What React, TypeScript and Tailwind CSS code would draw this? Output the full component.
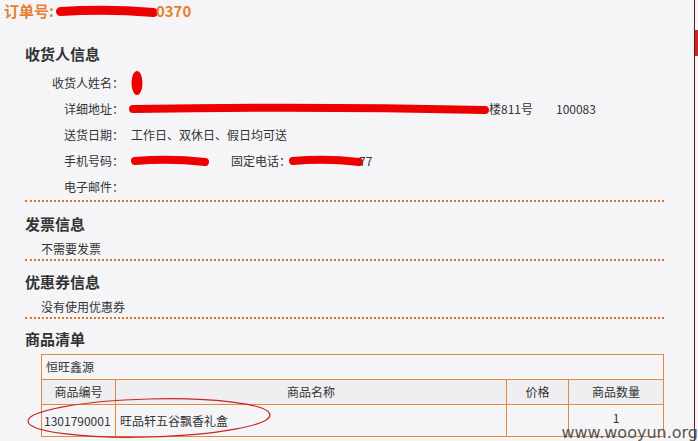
const cjk = "font-['SimSun','Noto_Sans_CJK_SC',sans-serif]";

function Scribble({ w, h = 8, className = "" }: { w: number; h?: number; className?: string }) {
  return (
    <svg width={w} height={h + 4} className={className} viewBox={`0 0 ${w} ${h + 4}`}>
      <path
        d={`M ${h / 2} ${h / 2 + 2} Q ${w / 2} ${h / 2 - 1} ${w - h / 2} ${h / 2 + 3}`}
        stroke="#ee0000"
        strokeWidth={h}
        strokeLinecap="round"
        fill="none"
      />
    </svg>
  );
}

function Row({ label, children }: { label: string; children?: React.ReactNode }) {
  return (
    <div className="flex h-[26px] items-center">
      <div className="w-[99px] text-right text-[#333]">{label}</div>
      <div className="ml-[7px] flex items-center text-[#333]">{children}</div>
    </div>
  );
}

function Dotted() {
  return <div className="h-0 border-b-2 border-dotted border-[#d9742b]" />;
}

function Heading({ children, className = "" }: { children: React.ReactNode; className?: string }) {
  return <h2 className={`h-[20px] text-[15px] font-bold leading-[20px] text-[#333] ${className}`}>{children}</h2>;
}

export default function App() {
  return (
    <div className={`relative flex h-[441px] w-[698px] overflow-hidden bg-[#f5f5f8] text-[12px] ${cjk}`}>
      <main className="relative w-[694px]">
        <div className="flex h-[21px] items-center pl-[4px] pt-[1px] text-[15px] font-bold leading-[20px] text-[#e5812e]">
          <span>订单号:</span>
          <Scribble w={102} h={9} className="ml-[2px] -mr-[2px]" />
          <span>0370</span>
        </div>

        <section className="ml-[25px] w-[639px]">
          <Heading className="mt-[23px]">收货人信息</Heading>
          <div className="mt-[6px]">
            <Row label="收货人姓名：">
              <svg width="14" height="26" viewBox="0 0 14 26">
                <ellipse cx="6" cy="13" rx="5.5" ry="12" fill="#ee0000" />
              </svg>
            </Row>
            <Row label="详细地址：">
              <Scribble w={360} h={8} className="-ml-[2px]" />
              <span>楼811号</span>
              <span className="ml-[23px]">100083</span>
            </Row>
            <Row label="送货日期：">工作日、双休日、假日均可送</Row>
            <Row label="手机号码：">
              <Scribble w={78} h={8} />
              <span className="ml-[22px]">固定电话：</span>
              <Scribble w={74} h={8} className="-ml-[2px]" />
              <span className="-ml-[4px]">77</span>
            </Row>
            <Row label="电子邮件：" />
          </div>
          <Dotted />

          <Heading className="mt-[12px]">发票信息</Heading>
          <div className="h-[25px] pl-[16px] pt-[6px] leading-[18px] text-[#333]">不需要发票</div>
          <Dotted />

          <Heading className="mt-[11px]">优惠券信息</Heading>
          <div className="h-[25px] pl-[16px] pt-[6px] leading-[18px] text-[#333]">没有使用优惠券</div>
          <Dotted />

          <Heading className="mt-[10px]">商品清单</Heading>
          <div className="relative ml-[16px] mt-[5px] w-[623px]">
            <table className="w-full border-collapse text-[#333]">
              <tbody>
                <tr className="h-[25px]">
                  <td colSpan={4} className="border border-[#e08a3c] pl-[4px]">恒旺鑫源</td>
                </tr>
                <tr className="h-[25px] bg-[#efeff1]">
                  <td className="w-[74px] border border-[#e08a3c] text-center">商品编号</td>
                  <td className="border border-[#e08a3c] text-center">商品名称</td>
                  <td className="w-[62px] border border-[#e08a3c] text-center">价格</td>
                  <td className="w-[95px] border border-[#e08a3c] text-center">商品数量</td>
                </tr>
                <tr className="h-[32px]">
                  <td className="border border-[#e08a3c] pl-[2px]">1301790001</td>
                  <td className="border border-[#e08a3c] pl-[4px]">旺品轩五谷飘香礼盒</td>
                  <td className="border border-[#e08a3c]" />
                  <td className="border border-[#e08a3c] pb-[6px] text-center leading-[14px]">1</td>
                </tr>
              </tbody>
            </table>
            <svg className="absolute left-[-14px] top-[43px]" width="246" height="42" viewBox="0 0 246 42">
              <ellipse cx="122" cy="21" rx="121" ry="19" fill="none" stroke="#cc2222" strokeWidth="1.2" transform="rotate(-1.5 122 21)" />
            </svg>
          </div>
        </section>

        <div className="absolute bottom-[-4px] right-[-4px] font-['DejaVu_Sans',sans-serif] text-[16px] text-[#555]">
          www.wooyun.org
        </div>
      </main>
      <div className="w-[1px] bg-[#5a1a1a]" />
      <div className="flex w-[3px] flex-col bg-[#f5f5f8]">
        <div className="mt-[30px] h-[26px] bg-[#c82828]" />
      </div>
    </div>
  );
}
